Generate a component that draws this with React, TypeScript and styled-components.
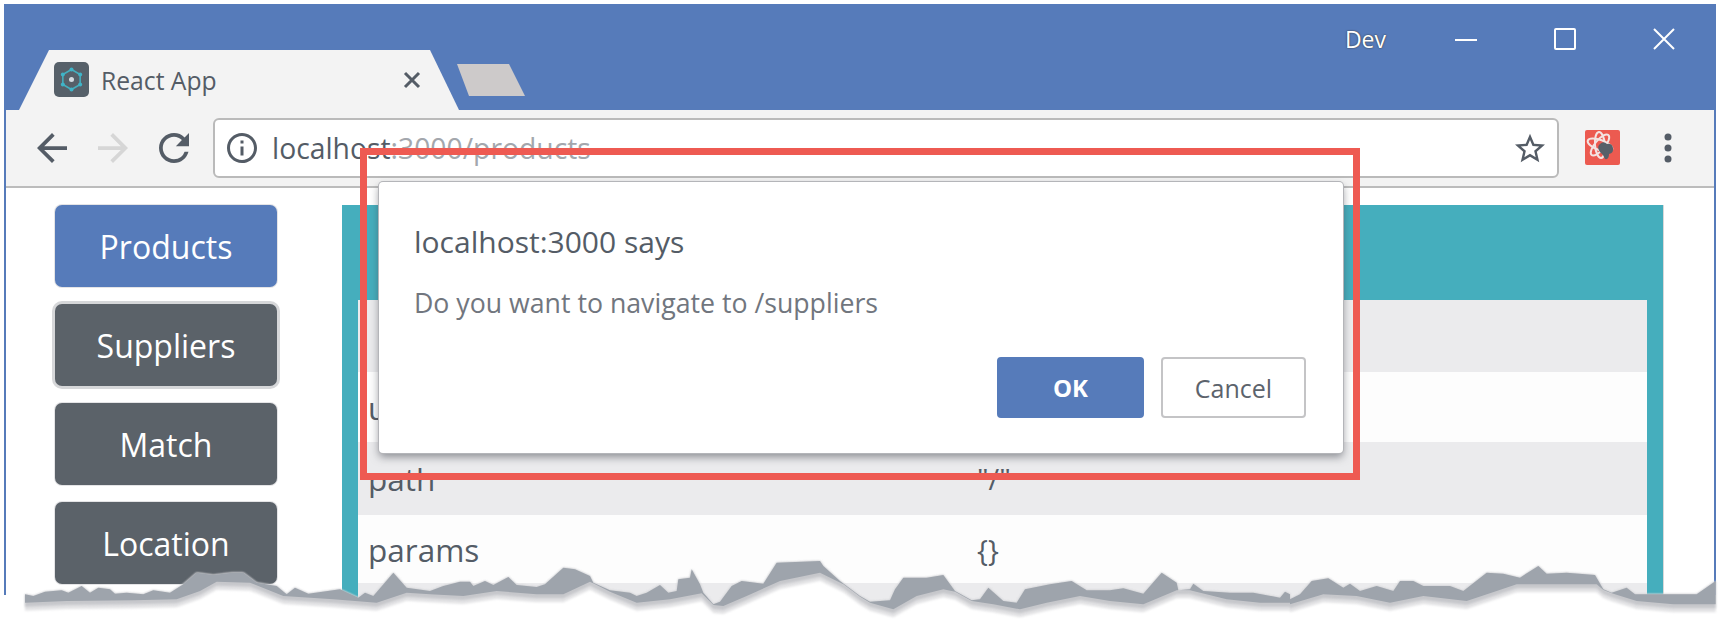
import React from 'react';
import styled, { createGlobalStyle } from 'styled-components';

const FONT = '"Open Sans", "Noto Sans", "Liberation Sans", sans-serif';
const BLUE = '#567bba';
const SLATE = '#5b6269';
const TEXT = '#545c66';

// traced off the torn paper edge, per strip: [strip x, x*3, y*3 - from y 561]
const strip = (base: number, pts: number[]) => {
  const out: [number, number][] = [];
  for (let i = 0; i < pts.length; i += 2) {
    out.push([base + pts[i] / 3, 561 + pts[i + 1] / 3]);
  }
  return out;
};

const tornTop = [
  ...strip(0, [75, 100, 100, 105, 135, 92, 185, 88, 205, 95, 245, 75, 270, 95, 295, 80, 330, 85, 345, 98, 380, 95, 430, 100, 460, 88, 510, 95, 550, 70, 590, 35, 640, 42, 695, 35, 730, 35, 770, 65, 830, 75, 860, 100, 885, 80, 925, 98, 1020, 85, 1075, 110, 1095, 95, 1120, 105, 1180, 35, 1220, 80, 1290, 90]),
  ...strip(430, [40, 75, 90, 62, 120, 62, 130, 75, 165, 60, 190, 72, 235, 48, 260, 72, 320, 78, 345, 70, 400, 20, 435, 25, 480, 45, 490, 65, 540, 88, 600, 95, 620, 105, 650, 95, 690, 72, 715, 95, 740, 90, 745, 55, 780, 50, 785, 25, 810, 70, 820, 95, 850, 130, 870, 122, 905, 75, 935, 60, 1000, 68, 1040, 5, 1170, 0, 1180, 15, 1230, 60, 1290, 105]),
  ...strip(860, [30, 122, 90, 118, 105, 85, 130, 50, 200, 50, 250, 42, 285, 90, 335, 118, 360, 115, 385, 80, 430, 120, 470, 125, 495, 85, 570, 70, 635, 60, 680, 88, 750, 88, 790, 82, 850, 98, 905, 35, 950, 65, 955, 88, 990, 85, 1000, 68, 1030, 90, 1110, 95, 1180, 95, 1260, 110, 1275, 92, 1290, 100]),
  ...strip(1290, [0, 115, 30, 100, 65, 60, 115, 52, 160, 80, 180, 68, 210, 90, 260, 75, 310, 90, 330, 60, 370, 60, 400, 75, 480, 75, 520, 90, 590, 35, 640, 38, 690, 50, 745, 15, 770, 38, 830, 35, 915, 42, 940, 85, 965, 95, 1010, 80, 1035, 100, 1130, 100, 1220, 100, 1277, 60]),
];

const tornBottom = [
  ...strip(0, [75, 125, 200, 120, 400, 118, 530, 115, 600, 90, 650, 62, 750, 65, 850, 105, 1000, 115, 1130, 125, 1220, 95, 1290, 100]),
  ...strip(430, [100, 105, 200, 90, 320, 100, 400, 100, 480, 62, 540, 92, 620, 125, 720, 115, 815, 97, 850, 132, 880, 135, 950, 105, 1050, 60, 1170, 35, 1240, 70, 1290, 107]),
  ...strip(860, [30, 125, 100, 145, 170, 105, 250, 85, 285, 92, 335, 120, 400, 130, 480, 145, 560, 125, 660, 105, 750, 120, 850, 130, 950, 88, 990, 88, 1100, 115, 1200, 125, 1290, 125]),
  ...strip(1290, [0, 130, 100, 100, 200, 105, 300, 125, 400, 105, 530, 120, 620, 90, 680, 70, 800, 70, 920, 70, 940, 87, 965, 97, 1040, 120, 1150, 130, 1277, 130]),
];

const toPoints = (pts: [number, number][]) => pts.map(p => p.join(',')).join(' ');
const band = (drop: number) =>
  toPoints([...tornTop, ...[...tornBottom].reverse().map(([x, y]) => [x, y + drop] as [number, number])]);

const GlobalStyle = createGlobalStyle`
  html, body {
    margin: 0;
    background: #fff;
    font-family: ${FONT};
  }
`;

const Page = styled.div`
  position: relative;
  box-sizing: border-box;
  width: 1720px;
  height: 621px;
  padding: 4px 4px 0;
  overflow: hidden;
  background: #fff;
`;

const BrowserWindow = styled.div`
  box-sizing: border-box;
  height: 591px;
  border-left: 2px solid ${BLUE};
  border-right: 2px solid ${BLUE};
`;

const TitleBar = styled.div`
  display: flex;
  align-items: flex-end;
  height: 106px;
  padding-left: 13px;
  background: ${BLUE};
`;

const Tab = styled.div`
  box-sizing: border-box;
  display: flex;
  align-items: center;
  width: 440px;
  height: 60px;
  padding: 0 38px 0 35px;
  background: #f3f3f3;
  clip-path: polygon(30px 0, 411px 0, 440px 100%, 0 100%);
`;

const Favicon = styled.svg`
  flex: none;
  width: 35px;
  height: 35px;
  margin-top: -2px;
`;

const TabTitle = styled.span`
  margin-left: 12px;
  font-size: 24.7px;
  color: ${TEXT};
`;

const TabClose = styled.svg`
  margin-left: auto;
  width: 18px;
  height: 18px;
`;

const NewTab = styled.div`
  width: 68px;
  height: 32px;
  margin: 0 0 14px -2px;
  background: #cdcaca;
  clip-path: polygon(0 0, 52px 0, 100% 100%, 12px 100%);
`;

const WindowControls = styled.div`
  display: flex;
  align-items: center;
  align-self: flex-start;
  margin: 24px 39px 0 auto;
`;

const Dev = styled.span`
  margin-right: 69px;
  font-size: 23px;
  line-height: 22px;
  color: #fff;
  text-shadow: 0 0 2px #3f464f, 0 0 1px #3f464f;
`;

const ControlIcon = styled.svg`
  width: 22px;
  height: 22px;
  & + & {
    margin-left: 77px;
  }
`;

const Toolbar = styled.div`
  box-sizing: border-box;
  display: flex;
  align-items: center;
  height: 78px;
  padding: 0 0 1px 31px;
  background: #f3f3f3;
  border-bottom: 2px solid #bcbcbc;
`;

const NavIcon = styled.svg<{ $muted?: boolean }>`
  flex: none;
  width: 30px;
  height: 30px;
  fill: ${p => (p.$muted ? '#d6d6d6' : TEXT)};
  & + & {
    margin-left: 31px;
  }
`;

const AddressBar = styled.div`
  box-sizing: border-box;
  display: flex;
  align-items: center;
  width: 1346px;
  height: 60px;
  margin-left: 24px;
  padding: 0 12px 0 12px;
  background: #fff;
  border: 2px solid #bababa;
  border-radius: 6px;
`;

const Url = styled.span`
  margin-left: 15px;
  font-size: 28.3px;
  color: ${TEXT};
  & em {
    font-style: normal;
    color: #a3a7ad;
  }
`;

const Star = styled(NavIcon)`
  margin-left: auto;
`;

const Extension = styled.svg`
  flex: none;
  width: 35px;
  height: 35px;
  margin-left: 26px;
`;

const Kebab = styled.svg`
  flex: none;
  width: 8px;
  height: 30px;
  margin-left: 44px;
`;

const Body = styled.div`
  display: grid;
  grid-template-columns: 222px 1322px;
  column-gap: 65px;
  height: 433px;
  padding: 17px 0 0 49px;
  background: #fff;
`;

const Sidebar = styled.nav`
  display: flex;
  flex-direction: column;
  gap: 17px;
`;

const NavButton = styled.div<{ $active?: boolean; $focused?: boolean }>`
  display: flex;
  align-items: center;
  justify-content: center;
  height: 82px;
  border-radius: 7px;
  font-size: 32px;
  color: #fff;
  background: ${p => (p.$active ? BLUE : SLATE)};
  box-shadow: ${p => (p.$focused ? '0 0 0 3px #d6d7d9' : '0 0 0 1px #e4e4e6')};
`;

const Card = styled.section`
  display: flex;
  flex-direction: column;
  padding: 95px 16px 0;
  background: #45aebd;
  border-right: 1px solid #d8d8d8;
`;

const Table = styled.div`
  flex: 1;
  display: grid;
  grid-template-rows: 72px 70px 73px 68px 1fr;
`;

const Row = styled.div`
  display: grid;
  grid-template-columns: 609px 1fr;
  align-items: center;
  padding-left: 10px;
  font-size: 31.5px;
  color: ${TEXT};
  background: #fdfdfd;
  &:nth-child(odd) {
    background: #ebebed;
  }
`;

const Value = styled.span`
  font-size: 29px;
`;

const Highlight = styled.div`
  position: absolute;
  left: 360px;
  top: 148px;
  box-sizing: border-box;
  width: 1000px;
  height: 332px;
  border: 7px solid #ee5a52;
`;

const Dialog = styled.div`
  position: absolute;
  left: 379px;
  top: 182px;
  box-sizing: border-box;
  display: flex;
  flex-direction: column;
  width: 964px;
  height: 271px;
  padding: 42px 37px 35px 35px;
  background: #fff;
  border-radius: 4px;
  box-shadow: 0 0 0 1px #b4b5b9, 0 4px 8px rgba(60, 64, 72, 0.55);
`;

const DialogTitle = styled.div`
  font-size: 30px;
  line-height: 36px;
  color: ${TEXT};
`;

const DialogMessage = styled.div`
  margin-top: 25px;
  font-size: 26.7px;
  line-height: 36px;
  color: #71767e;
`;

const DialogActions = styled.div`
  display: flex;
  justify-content: flex-end;
  gap: 17px;
  margin-top: auto;
`;

const DialogButton = styled.div<{ $primary?: boolean }>`
  box-sizing: border-box;
  display: flex;
  align-items: center;
  justify-content: center;
  width: ${p => (p.$primary ? 147 : 145)}px;
  height: 61px;
  border-radius: 4px;
  font-size: ${p => (p.$primary ? 24 : 25)}px;
  font-weight: ${p => (p.$primary ? 700 : 400)};
  color: ${p => (p.$primary ? '#fff' : '#5c636c')};
  background: ${p => (p.$primary ? BLUE : '#fff')};
  border: 2px solid ${p => (p.$primary ? BLUE : '#c4c4c6')};
`;

const TornEdge = styled.svg`
  position: absolute;
  left: 0;
  top: 0;
  width: 1720px;
  height: 621px;
  pointer-events: none;
`;

const SoftBand = styled.polygon`
  filter: blur(1px);
`;

const hexAngles = [0, 60, 120, 180, 240, 300];

function ReactFavicon() {
  return (
    <Favicon viewBox="0 0 35 35">
      <rect width="35" height="35" rx="5" fill="#566069" />
      <g stroke="#45aebd" strokeWidth="1.6" fill="none">
        <polygon
          points={hexAngles
            .map(a => {
              const r = ((a - 90) * Math.PI) / 180;
              return `${17.5 + 10 * Math.cos(r)},${17.5 + 10 * Math.sin(r)}`;
            })
            .join(' ')}
        />
      </g>
      {hexAngles.map(a => {
        const r = ((a - 90) * Math.PI) / 180;
        return (
          <circle
            key={a}
            cx={17.5 + 10 * Math.cos(r)}
            cy={17.5 + 10 * Math.sin(r)}
            r="2"
            fill="#3fb4c8"
          />
        );
      })}
      <circle cx="17.5" cy="17.5" r="2.5" fill="#d5dde2" />
    </Favicon>
  );
}

function ExtensionIcon() {
  return (
    <Extension viewBox="0 0 35 35">
      <rect width="35" height="35" rx="2" fill="#ec5a50" />
      <g fill="none" stroke="#f3e4e2" strokeWidth="2">
        <ellipse cx="15" cy="15" rx="13" ry="5" transform="rotate(20 15 15)" />
        <ellipse cx="15" cy="15" rx="13" ry="5" transform="rotate(-50 15 15)" />
        <ellipse cx="15" cy="15" rx="13" ry="5" transform="rotate(85 15 15)" />
      </g>
      <path
        d="M14 15 Q18 10 22 14 Q27 13 28 18 Q29 23 24 24 Q24 30 20 29 Q18 24 15 22 Q12 18 14 15Z"
        fill="#566069"
      />
    </Extension>
  );
}

export default function App() {
  return (
    <Page>
      <GlobalStyle />
      <BrowserWindow>
        <TitleBar>
          <Tab>
            <ReactFavicon />
            <TabTitle>React App</TabTitle>
            <TabClose viewBox="0 0 18 18">
              <path d="M2 2l14 14M16 2L2 16" stroke={TEXT} strokeWidth="3" />
            </TabClose>
          </Tab>
          <NewTab />
          <WindowControls>
            <Dev>Dev</Dev>
            <ControlIcon viewBox="0 0 22 22">
              <path d="M0 12h22" stroke="#fff" strokeWidth="2" />
            </ControlIcon>
            <ControlIcon viewBox="0 0 22 22">
              <rect x="1" y="1" width="20" height="20" rx="1" fill="none" stroke="#fff" strokeWidth="2" />
            </ControlIcon>
            <ControlIcon viewBox="0 0 22 22">
              <path d="M1 1l20 20M21 1L1 21" stroke="#fff" strokeWidth="2" />
            </ControlIcon>
          </WindowControls>
        </TitleBar>
        <Toolbar>
          <NavIcon viewBox="4 4 16 16">
            <path d="M20 11H7.83l5.59-5.59L12 4l-8 8 8 8 1.41-1.41L7.83 13H20v-2z" />
          </NavIcon>
          <NavIcon $muted viewBox="4 4 16 16">
            <path d="M12 4l-1.41 1.41L16.17 11H4v2h12.17l-5.58 5.59L12 20l8-8z" />
          </NavIcon>
          <NavIcon viewBox="4 4 16 16">
            <path d="M17.65 6.35A7.958 7.958 0 0 0 12 4c-4.42 0-7.99 3.58-7.99 8s3.57 8 7.99 8c3.73 0 6.84-2.55 7.73-6h-2.08A5.99 5.99 0 0 1 12 18c-3.31 0-6-2.69-6-6s2.69-6 6-6c1.66 0 3.14.69 4.22 1.78L13 11h7V4l-2.35 2.35z" />
          </NavIcon>
          <AddressBar>
            <NavIcon viewBox="2 2 20 20">
              <path d="M11 7h2v2h-2zm0 4h2v6h-2zm1-9C6.48 2 2 6.48 2 12s4.48 10 10 10 10-4.48 10-10S17.52 2 12 2zm0 18c-4.41 0-8-3.59-8-8s3.59-8 8-8 8 3.59 8 8-3.59 8-8 8z" />
            </NavIcon>
            <Url>
              localhost<em>:3000/products</em>
            </Url>
            <Star viewBox="2 2 20 19">
              <path d="M22 9.24l-7.19-.62L12 2 9.19 8.63 2 9.24l5.46 4.73L5.82 21 12 17.27 18.18 21l-1.63-7.03L22 9.24zM12 15.4l-3.76 2.27 1-4.28-3.32-2.88 4.38-.38L12 6.1l1.71 4.04 4.38.38-3.32 2.88 1 4.28L12 15.4z" />
            </Star>
          </AddressBar>
          <ExtensionIcon />
          <Kebab viewBox="0 0 8 30">
            <circle cx="4" cy="4" r="3.5" fill={TEXT} />
            <circle cx="4" cy="15" r="3.5" fill={TEXT} />
            <circle cx="4" cy="26" r="3.5" fill={TEXT} />
          </Kebab>
        </Toolbar>
        <Body>
          <Sidebar>
            <NavButton $active>Products</NavButton>
            <NavButton $focused>Suppliers</NavButton>
            <NavButton>Match</NavButton>
            <NavButton>Location</NavButton>
          </Sidebar>
          <Card>
            <Table>
              <Row />
              <Row>
                <span>url</span>
              </Row>
              <Row>
                <span>path</span>
                <Value>"/"</Value>
              </Row>
              <Row>
                <span>params</span>
                <Value>{'{}'}</Value>
              </Row>
              <Row />
            </Table>
          </Card>
        </Body>
      </BrowserWindow>

      <Highlight />
      <Dialog>
        <DialogTitle>localhost:3000 says</DialogTitle>
        <DialogMessage>Do you want to navigate to /suppliers</DialogMessage>
        <DialogActions>
          <DialogButton $primary>OK</DialogButton>
          <DialogButton>Cancel</DialogButton>
        </DialogActions>
      </Dialog>

      <TornEdge viewBox="0 0 1720 621">
        <polygon
          fill="#fff"
          points={`0,621 0,604 ${toPoints(tornBottom)} 1720,600 1720,621`}
        />
        <SoftBand fill="#e3e3e5" points={band(8)} />
        <SoftBand fill="#c6c7cb" points={band(4)} />
        <polygon fill="#9ea4ac" points={band(0)} />
      </TornEdge>
    </Page>
  );
}
